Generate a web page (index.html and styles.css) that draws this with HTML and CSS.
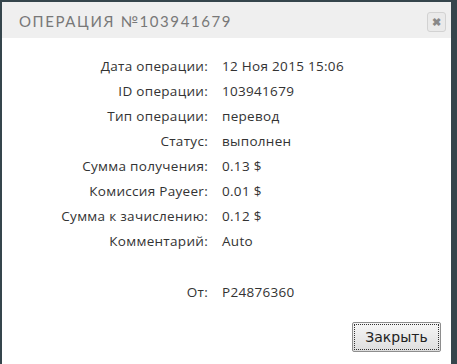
FILE: index.html
```html
<!DOCTYPE html>
<html lang="ru">
<head>
  <meta charset="UTF-8" />
  <title>Операция №103941679</title>
  <link rel="stylesheet" href="styles.css">
</head>
<body>
  <div class="dialog">
    <div class="dialog-head">
      <span class="dialog-title">Операция №103941679</span>
      <button class="close">&#10006;</button>
    </div>

    <div class="info">
      <div class="label">Дата операции:</div><div class="value">12 Ноя 2015 15:06</div>
      <div class="label">ID операции:</div><div class="value">103941679</div>
      <div class="label">Тип операции:</div><div class="value">перевод</div>
      <div class="label">Статус:</div><div class="value">выполнен</div>
      <div class="label">Сумма получения:</div><div class="value">0.13 $</div>
      <div class="label">Комиссия Payeer:</div><div class="value">0.01 $</div>
      <div class="label">Сумма к зачислению:</div><div class="value">0.12 $</div>
      <div class="label">Комментарий:</div><div class="value">Auto</div>
      <div class="label gap">От:</div><div class="value gap">P24876360</div>
    </div>

    <div class="dialog-foot">
      <button class="btn">Закрыть</button>
    </div>
  </div>
</body>
</html>
```

FILE: styles.css
```css
html, body {
  height: 100%;
}
body {
  margin: 0;
  padding: 2px 6px 0 2px;
  box-sizing: border-box;
  background: #35454c;
  font-family: "Open Sans", sans-serif;
}
.dialog {
  background: #fff;
  height: 100%;
  display: flex;
  flex-direction: column;
}
.dialog-head {
  height: 36px;
  background: #efefef;
  display: flex;
  align-items: center;
  justify-content: space-between;
  padding: 0 5px 0 17px;
}
.dialog-title {
  text-transform: uppercase;
  font-family: Lato, sans-serif;
  font-size: 15px;
  letter-spacing: 1.6px;
  color: #787878;
  padding-top: 1px;
}
.close {
  width: 19px;
  height: 20px;
  margin-top: 4px;
  padding: 0;
  border: 1px solid #d2d2d2;
  border-radius: 3px;
  background: #eaeaea;
  color: #888;
  font-size: 11px;
  font-weight: bold;
  line-height: 18px;
  cursor: pointer;
}
.info {
  display: grid;
  grid-template-columns: 206px auto;
  column-gap: 14px;
  padding-top: 16px;
  font-size: 13.5px;
  letter-spacing: 0.3px;
  line-height: 25px;
  color: #333;
}
.label {
  text-align: right;
}
.gap {
  margin-top: 26px;
}
.dialog-foot {
  margin-top: auto;
  display: flex;
  justify-content: flex-end;
  padding: 0 10px 12px 0;
}
.btn {
  width: 89px;
  height: 30px;
  font-family: "DejaVu Sans", sans-serif;
  font-size: 14px;
  color: #222;
  border: 1px solid #8e8e8e;
  border-radius: 2px;
  background: linear-gradient(#f6f6f6, #dedede);
  outline: 1px dotted #333;
  outline-offset: -3px;
}
```
